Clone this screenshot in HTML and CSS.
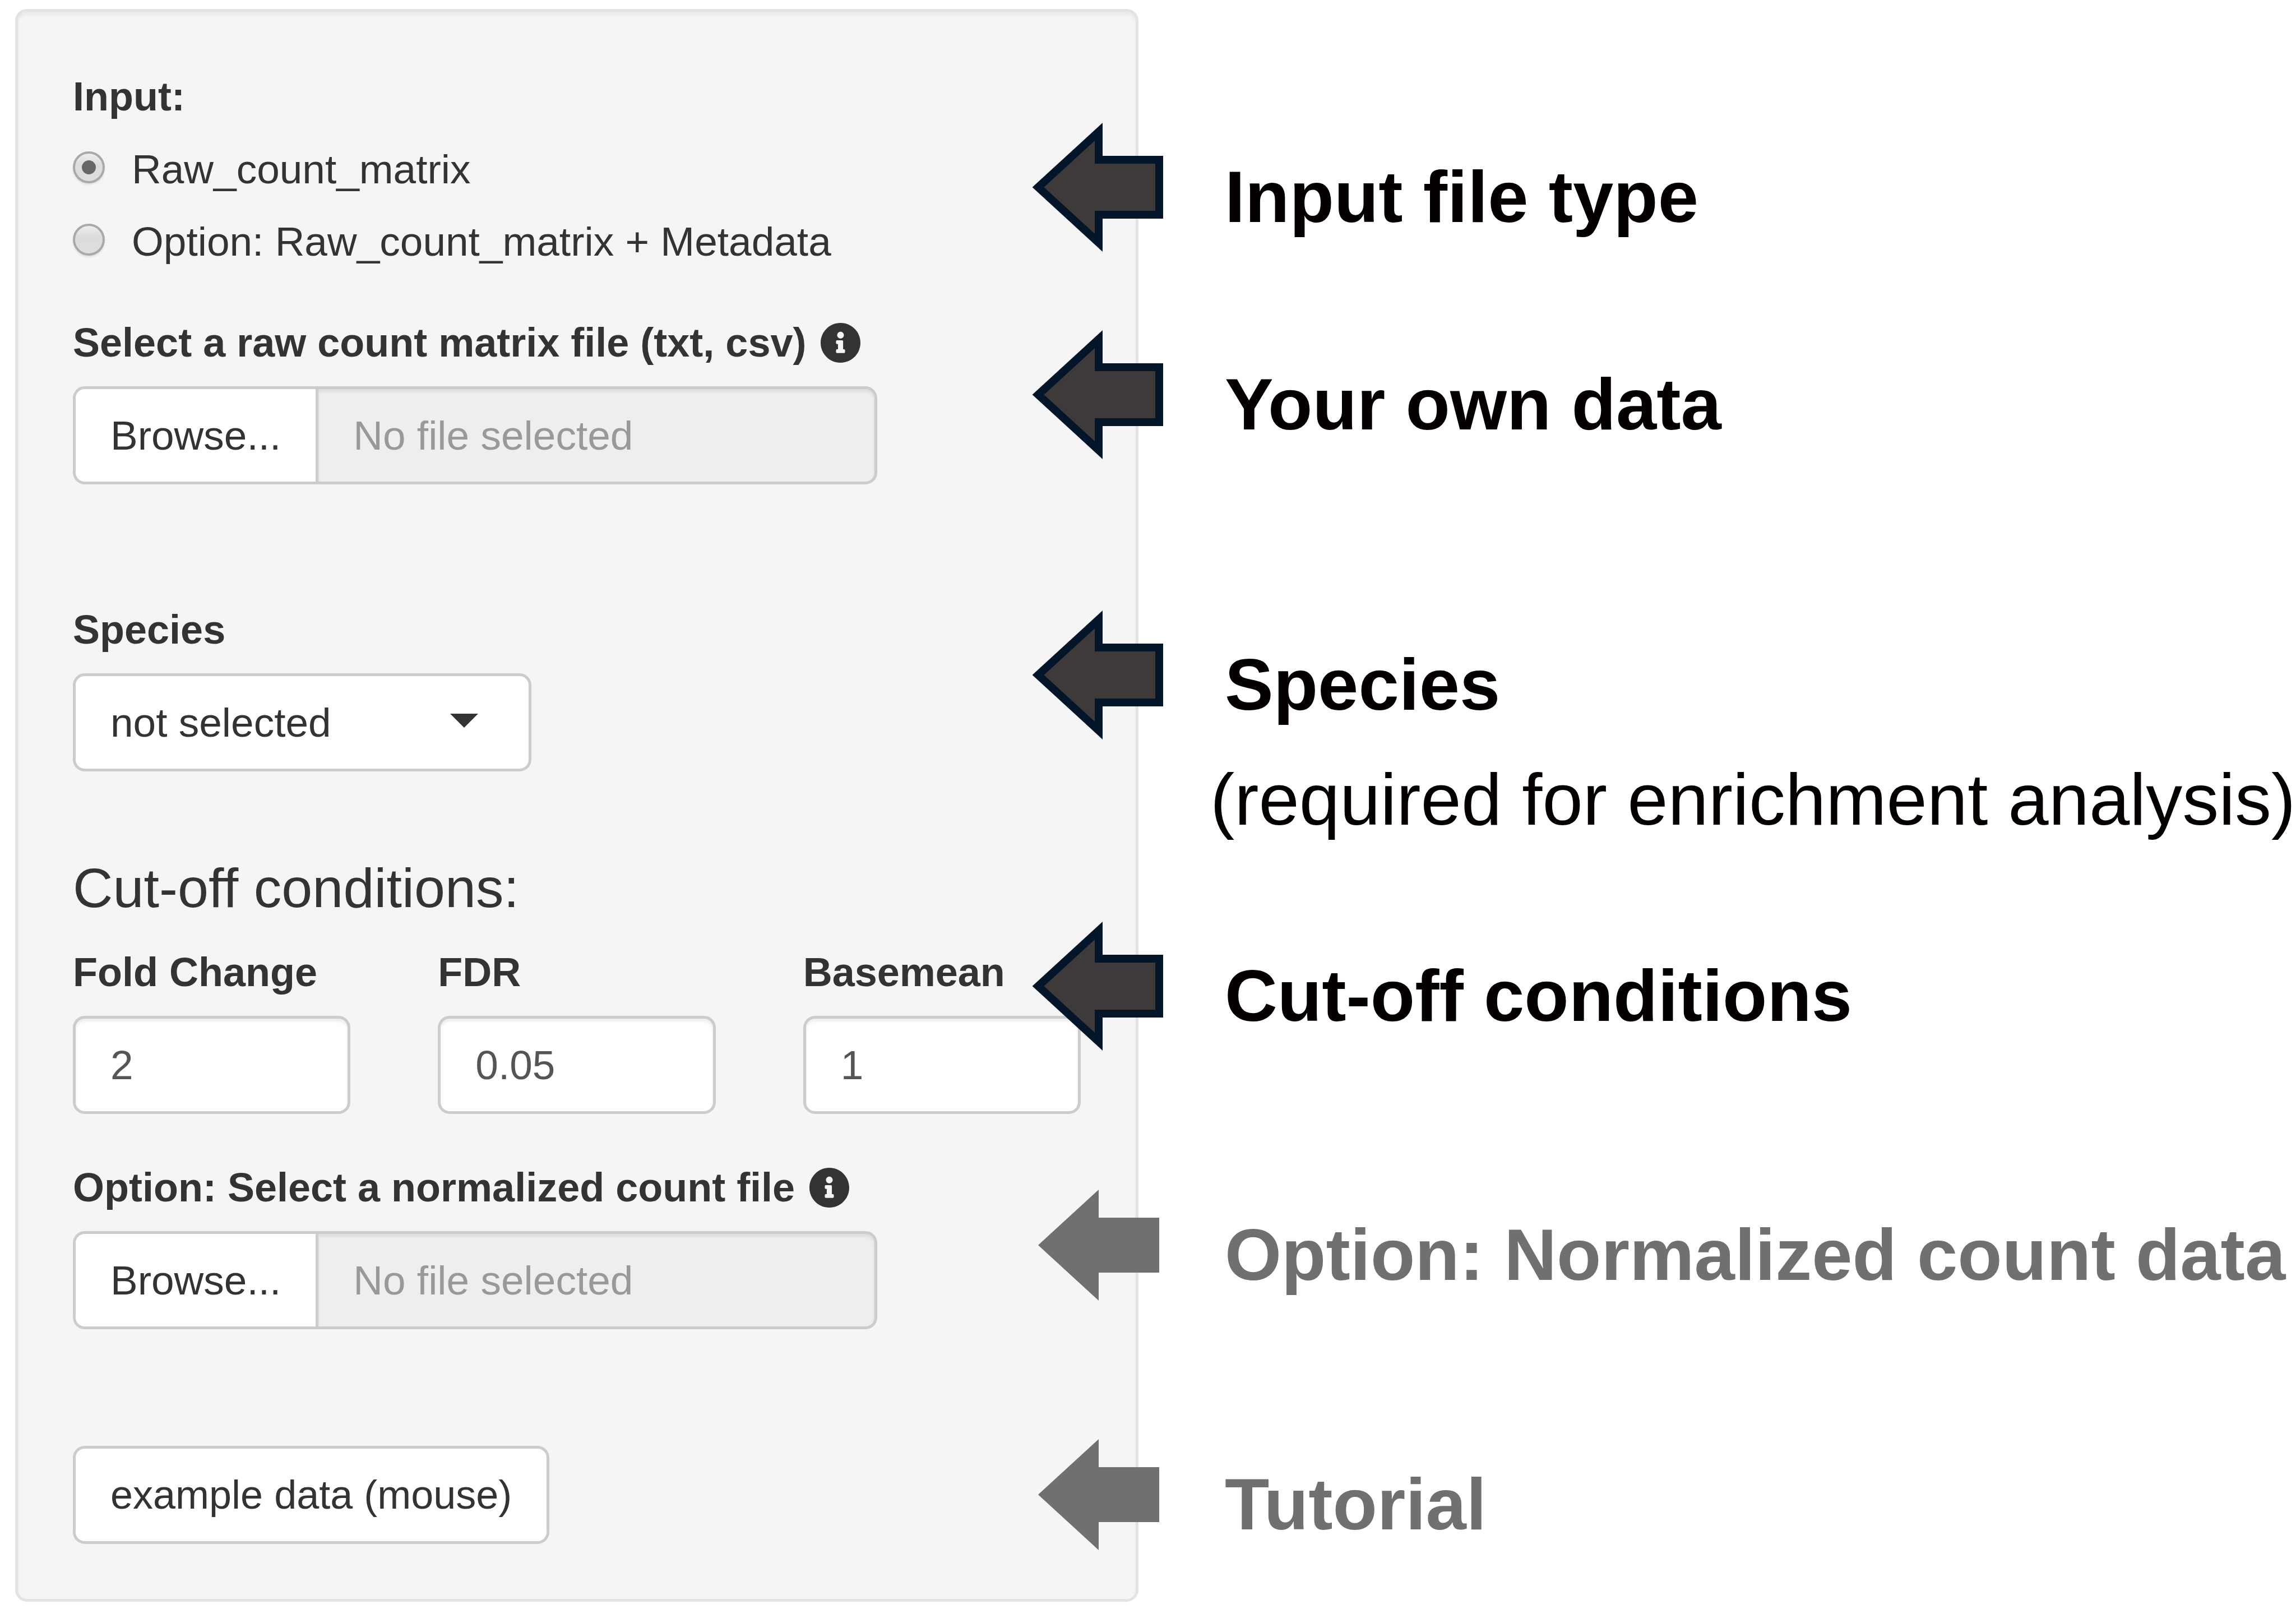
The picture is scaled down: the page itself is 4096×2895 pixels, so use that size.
FILE: index.html
```html
<!DOCTYPE html>
<html lang="en">
<head>
<meta charset="utf-8">
<title>Input settings guide</title>
<link rel="stylesheet" href="styles.css">
</head>
<body>
<svg class="sprite" aria-hidden="true">
  <symbol id="icon-info" viewBox="8 8 496 496">
    <path d="M256 8C119.043 8 8 119.083 8 256c0 136.997 111.043 248 248 248s248-111.003 248-248C504 119.083 392.957 8 256 8zm0 110c23.196 0 42 18.804 42 42s-18.804 42-42 42-42-18.804-42-42 18.804-42 42-42zm56 254c0 6.627-5.373 12-12 12h-88c-6.627 0-12-5.373-12-12v-24c0-6.627 5.373-12 12-12h12v-64h-12c-6.627 0-12-5.373-12-12v-24c0-6.627 5.373-12 12-12h64c6.627 0 12 5.373 12 12v100h12c6.627 0 12 5.373 12 12v24z"/>
  </symbol>
</svg>
<main class="guide">
  <form class="panel">
    <fieldset class="field radios">
      <legend class="label">Input:</legend>
      <label class="radio"><input type="radio" name="input_type" checked><span>Raw_count_matrix</span></label>
      <label class="radio"><input type="radio" name="input_type"><span>Option: Raw_count_matrix + Metadata</span></label>
    </fieldset>

    <div class="field field-file">
      <label class="label" for="counts">Select a raw count matrix file (txt, csv)
        <svg class="info"><use href="#icon-info"/></svg></label>
      <div class="file">
        <button type="button" class="btn">Browse...</button>
        <input id="counts" class="control" type="text" placeholder="No file selected" readonly>
      </div>
    </div>

    <div class="field">
      <label class="label" for="species">Species</label>
      <div class="picker">
        <select id="species" class="control">
          <option>not selected</option>
        </select>
      </div>
    </div>

    <h4 class="heading">Cut-off conditions:</h4>
    <div class="columns">
      <div class="field">
        <label class="label" for="fc">Fold Change</label>
        <input id="fc" class="control" type="number" value="2">
      </div>
      <div class="field">
        <label class="label" for="fdr">FDR</label>
        <input id="fdr" class="control" type="number" step="0.01" value="0.05">
      </div>
      <div class="field">
        <label class="label" for="basemean">Basemean</label>
        <input id="basemean" class="control" type="number" value="1">
      </div>
    </div>

    <div class="field field-file">
      <label class="label" for="norm">Option: Select a normalized count file
        <svg class="info"><use href="#icon-info"/></svg></label>
      <div class="file">
        <button type="button" class="btn">Browse...</button>
        <input id="norm" class="control" type="text" placeholder="No file selected" readonly>
      </div>
    </div>

    <button type="button" class="btn example">example data (mouse)</button>
  </form>

  <ul class="notes">
    <li class="note note-input">
      <svg class="arrow" viewBox="0 0 216 198"><path d="M0 99 108 0V50H216V148H108V198Z"/></svg>
      <strong>Input file type</strong>
    </li>
    <li class="note note-data">
      <svg class="arrow" viewBox="0 0 216 198"><path d="M0 99 108 0V50H216V148H108V198Z"/></svg>
      <strong>Your own data</strong>
    </li>
    <li class="note note-species">
      <svg class="arrow" viewBox="0 0 216 198"><path d="M0 99 108 0V50H216V148H108V198Z"/></svg>
      <strong>Species</strong>
      <p class="remark">(required for enrichment analysis)</p>
    </li>
    <li class="note note-cutoff">
      <svg class="arrow" viewBox="0 0 216 198"><path d="M0 99 108 0V50H216V148H108V198Z"/></svg>
      <strong>Cut-off conditions</strong>
    </li>
    <li class="note note-option optional">
      <svg class="arrow" viewBox="0 0 216 198"><path d="M0 99 108 0V50H216V148H108V198Z"/></svg>
      <strong>Option: Normalized count data</strong>
    </li>
    <li class="note note-tutorial optional">
      <svg class="arrow" viewBox="0 0 216 198"><path d="M0 99 108 0V50H216V148H108V198Z"/></svg>
      <strong>Tutorial</strong>
    </li>
  </ul>
</main>
</body>
</html>
```
FILE: styles.css
```css
* {
  box-sizing: border-box;
}

body {
  margin: 0;
  background: #fff;
  color: #333;
  font: 73px/103px "Liberation Sans", Arial, sans-serif;
}

.sprite {
  display: none;
}

.guide {
  display: grid;
  grid-template-columns: 49.25% minmax(0, 1fr);
  align-items: start;
  padding: 16px 0 32px 27px;
}

/* settings panel */
.panel {
  display: flex;
  flex-direction: column;
  align-items: flex-start;
  padding: 100px 98px 98px;
  border: 5px solid #e3e3e3;
  border-radius: 21px;
  background: #f5f5f5;
  box-shadow: inset 0 5px 5px rgba(0, 0, 0, .05);
}

.field {
  width: 100%;
  min-width: 0;
  margin: 0;
  padding: 0;
  border: 0;
}

.label {
  display: flex;
  align-items: center;
  gap: 26px;
  margin-bottom: 26px;
  padding: 0;
  font-size: 72px;
  font-weight: bold;
  white-space: nowrap;
}

.info {
  width: 71px;
  height: 71px;
  fill: #333;
}

.radio {
  display: flex;
  align-items: center;
  gap: 48px;
  margin-bottom: 26px;
}

.radio input {
  display: grid;
  place-items: center;
  flex: none;
  width: 57px;
  height: 57px;
  margin: 0 0 6px;
  border: 4px solid #a9a9a9;
  border-radius: 50%;
  background: linear-gradient(#eee, #dcdcdc 40%, #dedede);
  box-shadow: 0 3px 3px rgba(0, 0, 0, .08);
  appearance: none;
}

.radio input:checked::before {
  content: "";
  width: 25px;
  height: 25px;
  border-radius: 50%;
  background: #666;
}

.radios {
  margin-bottom: 52px;
}

.control,
.btn {
  height: 175px;
  margin: 0;
  padding: 0 62px;
  border: 5px solid #ccc;
  border-radius: 21px;
  background: #fff;
  color: #333;
  font: inherit;
}

.control {
  display: block;
  width: 100%;
  min-width: 0;
  color: #555;
  box-shadow: inset 0 5px 5px rgba(0, 0, 0, .075);
  appearance: none;
}

.control::placeholder {
  color: #999;
  opacity: 1;
}

.control::-webkit-inner-spin-button {
  display: none;
}

.file {
  display: flex;
  width: 79.8%;
  margin-bottom: 208px;
}

.file .btn {
  flex: none;
  border-right: 0;
  border-radius: 21px 0 0 21px;
}

.file .control {
  border-radius: 0 21px 21px 0;
  background: #eee;
}

.picker {
  position: relative;
  width: 45.5%;
}

.picker .control {
  color: #333;
  box-shadow: none;
}

.picker::after {
  content: "";
  position: absolute;
  top: 72px;
  right: 95px;
  border: 25px solid transparent;
  border-top-color: #333;
  border-bottom: 0;
  pointer-events: none;
}

.heading {
  margin: 157px 0 48px;
  font-size: 99px;
  font-weight: 500;
  line-height: 102px;
}

.columns {
  display: grid;
  grid-template-columns: repeat(3, minmax(0, 1fr));
  gap: 156px;
  width: 100%;
  margin-bottom: 80px;
}

.example {
  font-size: 72px;
}

/* arrows and captions beside the panel */
.notes {
  margin: 0 0 0 -179px;
  padding: 219px 0 0;
  list-style: none;
  color: #040000;
  font-size: 130px;
  line-height: 150px;
  white-space: nowrap;
}

.note {
  display: grid;
  grid-template-columns: 216px minmax(0, 1fr);
  align-items: center;
  column-gap: 117px;
}

.note strong {
  padding-top: 34px;
}

.arrow {
  width: 216px;
  height: 198px;
  overflow: visible;
  fill: #3e3a39;
  stroke: #021529;
  stroke-width: 14px;
}

.optional {
  color: #707070;
}

.optional .arrow {
  fill: #707070;
  stroke: none;
}

.remark {
  grid-column: 1 / -1;
  margin: 48px 0 0;
  padding-left: 307px;
}

.note-data {
  margin-top: 172px;
}

.note-species {
  margin-top: 302px;
}

.note-cutoff {
  margin-top: 159px;
}

.note-option {
  margin-top: 264px;
}

.note-tutorial {
  margin-top: 247px;
}
```
